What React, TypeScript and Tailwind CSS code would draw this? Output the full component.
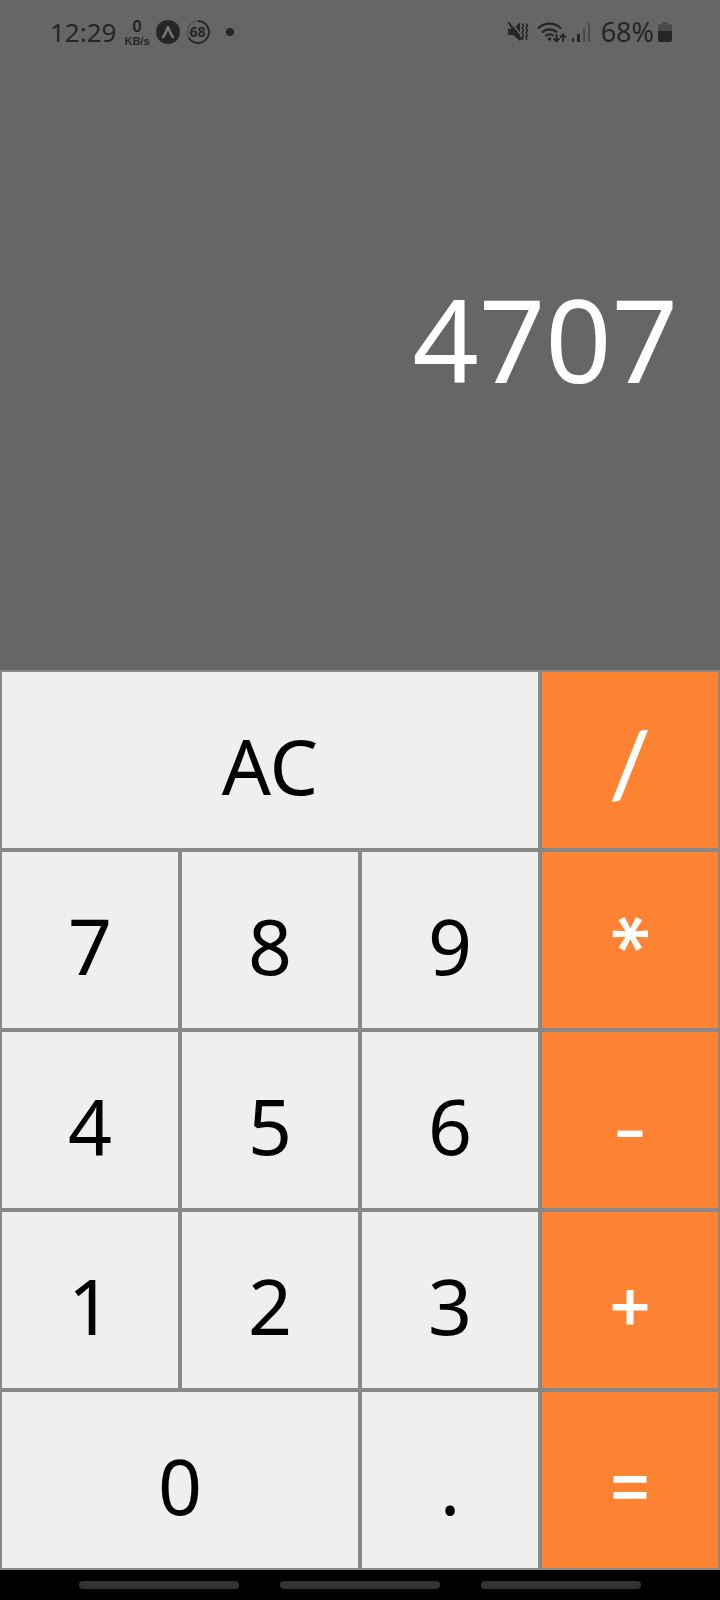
import { useState } from "react";

type Key = { label: string; name?: string; span?: string; face?: string; glyph?: string };

const operatorFace = "bg-[#fd8332] text-white font-['Inter',sans-serif]";
const digitFace = "bg-[#efefef] text-black font-[450] pt-3";

const keys: Key[] = [
  { label: "AC", name: "All clear", span: "col-span-3" },
  { label: "/", name: "Divide", face: operatorFace, glyph: "font-['Lato',sans-serif] font-semibold text-[91px] pt-1" },
  { label: "7" },
  { label: "8" },
  { label: "9" },
  { label: "*", name: "Multiply", face: operatorFace, glyph: "text-[86px] leading-[40px] font-medium rotate-90 pt-7 mb-3" },
  { label: "4" },
  { label: "5" },
  { label: "6" },
  { label: "-", name: "Subtract", face: operatorFace, glyph: "text-[78px] pt-5" },
  { label: "1" },
  { label: "2" },
  { label: "3" },
  { label: "+", name: "Add", face: operatorFace, glyph: "text-[72px] font-[450] pt-1" },
  { label: "0", span: "col-span-2" },
  { label: ".", name: "Decimal point" },
  { label: "=", name: "Equals", face: operatorFace, glyph: "text-[72px] font-[450] pt-1" },
];

function compute(a: number, b: number, op: string) {
  if (op === "/") return a / b;
  if (op === "*") return a * b;
  if (op === "-") return a - b;
  return a + b;
}

function StatusBar() {
  return (
    <header className="flex h-16 shrink-0 items-center justify-between pr-12 pl-[50px] text-[#262626]">
      <div className="flex items-center">
        <span className="text-[26px] leading-8">12:29</span>
        <span className="ml-2 flex flex-col items-center font-['Liberation_Sans',sans-serif] font-bold">
          <span className="text-[17px] leading-[17px]">0</span>
          <span className="text-[11px] leading-3">KB/s</span>
        </span>
        <svg className="ml-1.5 size-6" viewBox="0 0 24 24" aria-hidden="true">
          <circle cx="12" cy="12" r="12" fill="currentColor" />
          <path d="M7 17c2-2.500 3.500-6 5-10 1.500 4 3 7.500 5 10" fill="none" stroke="#777" strokeWidth="2.400" strokeLinecap="round" strokeLinejoin="round" />
        </svg>
        <span className="relative ml-1.5 flex size-6 items-center justify-center">
          <svg className="absolute inset-0 size-6" viewBox="0 0 24 24" aria-hidden="true">
            <circle cx="12" cy="12" r="11" fill="none" stroke="#484848" strokeWidth="1" />
            <path d="M12 1a11 11 0 1 1-9.500 16.500" fill="none" stroke="currentColor" strokeWidth="1.800" />
          </svg>
          <span className="text-[14px] leading-4 font-bold">68</span>
        </span>
        <span className="ml-4 size-2 rounded-full bg-[#262626]" />
      </div>
      <div className="flex items-center">
        <svg className="h-[22px] w-[22px]" viewBox="0 0 22 22" fill="none" stroke="currentColor" aria-hidden="true">
          <path d="M1 7.500h5l7-6v18.500l-7-6H1z" fill="currentColor" stroke="none" />
          <path d="M3.500 0.500L14 14" stroke="#666" strokeWidth="1.500" />
          <path d="M1.500 1.500L14.500 18.500" strokeWidth="2" />
          <path d="M15.500 2.500l1 2-1.500 2.500 1.500 2.500-1.500 2.500 1.500 2.500-1.500 2.500 1 2M19.500 2.500l1 2-1.500 2.500 1.500 2.500-1.500 2.500 1.500 2.500-1.500 2.500 1 2" strokeWidth="1.500" />
        </svg>
        <svg className="ml-2 h-[22px] w-[30px]" viewBox="0 0 30 22" fill="none" stroke="currentColor" aria-hidden="true">
          <path d="M1 7.500a16 16 0 0 1 23 0M5 11.500a10.500 10.500 0 0 1 15 0M8.500 15a5.800 5.800 0 0 1 8 0" strokeWidth="2.300" />
          <circle cx="12.500" cy="18" r="1.800" fill="currentColor" stroke="none" />
          <path d="M19.500 13v7.500M16.500 17.500l3 3 3-3M26 21v-7.500M23 16.500l3-3 3 3" strokeWidth="1.800" />
        </svg>
        <svg className="ml-1 h-[22px] w-5" viewBox="0 0 20 22" aria-hidden="true">
          <path d="M1 17h2v4H1zM6 13h3v8H6z" fill="currentColor" />
          <path d="M12 7h2v14h-2zM17 2h2v19h-2z" fill="#4a4a4a" />
        </svg>
        <span className="ml-2.5 text-[27px] leading-8">68%</span>
        <svg className="ml-1 h-[22px] w-[14px]" viewBox="0 0 14 22" aria-hidden="true">
          <path d="M4 1h6v2h2a2 2 0 0 1 2 2v5H0V5a2 2 0 0 1 2-2h2z" fill="#4a4a4a" />
          <path d="M0 10h14v9a2 2 0 0 1-2 2H2a2 2 0 0 1-2-2z" fill="currentColor" />
        </svg>
      </div>
    </header>
  );
}

export default function App() {
  const [value, setValue] = useState("4707");
  const [stored, setStored] = useState<number | null>(null);
  const [op, setOp] = useState("");
  const [fresh, setFresh] = useState(true);

  function press(label: string) {
    if (label === "AC") {
      setValue("0");
      setStored(null);
      setOp("");
      setFresh(true);
    } else if (/[0-9.]/.test(label)) {
      if (label === "." && !fresh && value.includes(".")) return;
      setValue(fresh ? (label === "." ? "0." : label) : value + label);
      setFresh(false);
    } else {
      const current = Number(value);
      const result = stored !== null && op && !fresh ? compute(stored, current, op) : current;
      setValue(String(result));
      setStored(label === "=" ? null : result);
      setOp(label === "=" ? "" : label);
      setFresh(true);
    }
  }

  return (
    <div className="flex min-h-screen flex-col bg-[#666] font-['Noto_Sans',sans-serif]">
      <StatusBar />
      <main className="flex grow flex-col">
        <div className="flex grow items-center justify-end overflow-hidden px-[42px] pb-[58px]">
          <output className="text-[116px] leading-[160px] font-[450] text-white">{value}</output>
        </div>
        <div className="grid grid-cols-4">
          {keys.map((key) => (
            <button
              key={key.label}
              type="button"
              aria-label={key.name}
              onClick={() => press(key.label)}
              className={`flex items-center justify-center border-2 border-[#888] text-[77px] leading-[104px] ${key.span ?? "aspect-square"} ${key.face ?? digitFace}`}
            >
              <span className={key.glyph}>{key.label}</span>
            </button>
          ))}
        </div>
      </main>
      <nav className="flex h-[30px] shrink-0 items-center justify-center gap-[41px] bg-black" aria-label="System navigation">
        <button type="button" aria-label="Recent apps" className="h-2 w-40 rounded-full bg-[#333]" />
        <button type="button" aria-label="Home" className="h-2 w-40 rounded-full bg-[#333]" />
        <button type="button" aria-label="Back" className="h-2 w-40 rounded-full bg-[#333]" />
      </nav>
    </div>
  );
}
